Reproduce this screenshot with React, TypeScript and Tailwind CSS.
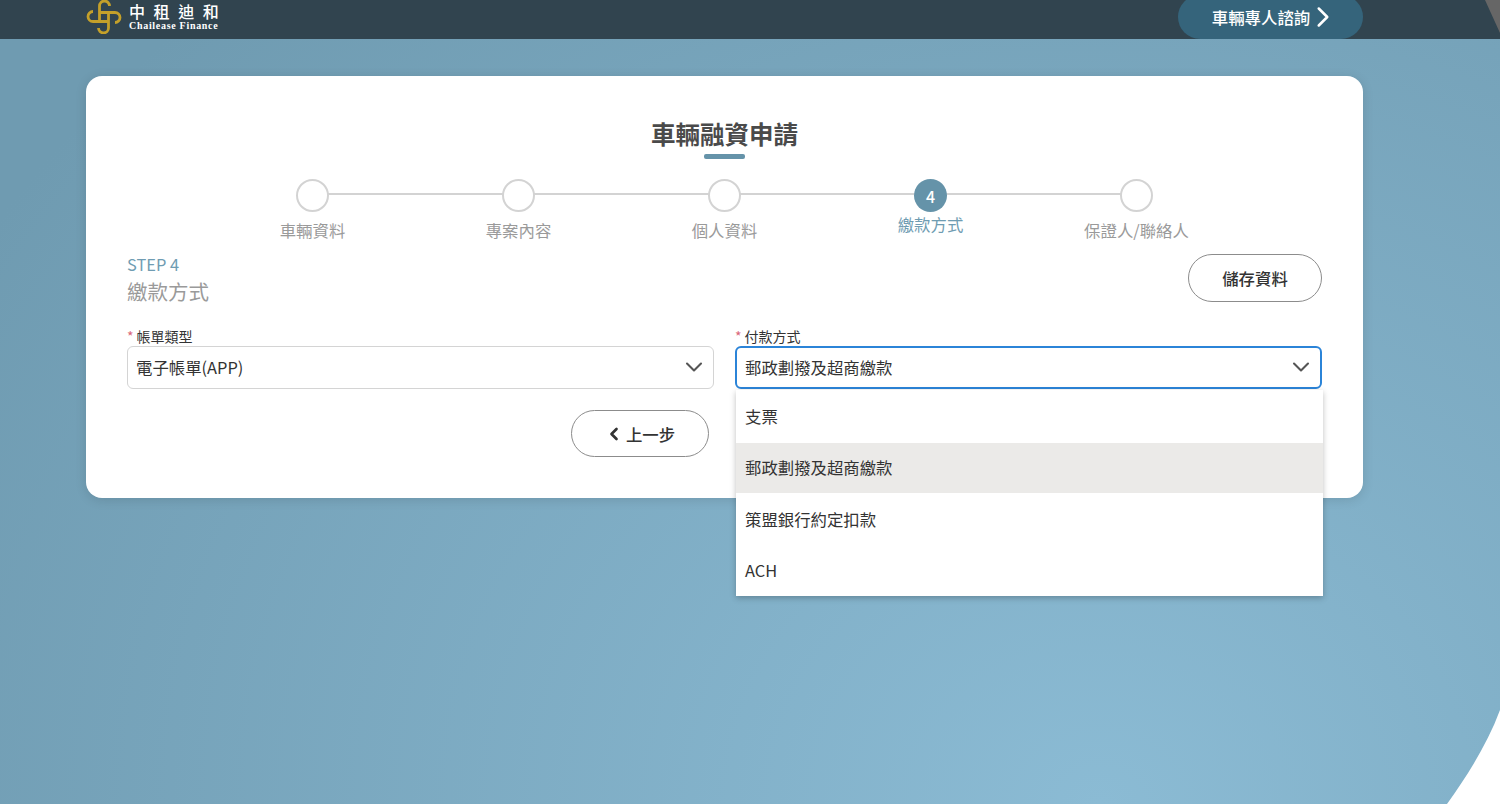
import { ChevronDown, ChevronLeft, ChevronRight } from "lucide-react"

const steps = ["車輛資料", "專案內容", "個人資料", "繳款方式", "保證人/聯絡人"]
const options = ["支票", "郵政劃撥及超商繳款", "策盟銀行約定扣款", "ACH"]

function Logo() {
  // four hooks turned around the middle square
  return (
    <svg width="36" height="34" viewBox="0 0 36 34" fill="none" stroke="#c4a02a" strokeWidth="2.8">
      {[0, 90, 180, 270].map((r) => (
        <path key={r} d="M13.5 21.5V6a5 5 0 0 1 10 0" transform={`rotate(${r} 18 17)`} />
      ))}
    </svg>
  )
}

function Step({ label, index }: { label: string; index: number }) {
  const active = index === 3
  return (
    <div className="relative flex flex-col items-center">
      {index < 4 && <div className="absolute left-1/2 top-[14px] h-[2px] w-full bg-[#d3d3d3]" />}
      {active ? (
        <div className="relative flex h-[33px] w-[33px] items-center justify-center rounded-full bg-[#6593a9] text-base font-medium text-white">
          4
        </div>
      ) : (
        <div className="relative h-[33px] w-[33px] rounded-full border-2 border-[#d3d3d3] bg-white" />
      )}
      <div className={active ? "text-[16.4px] text-[#6f9cb2]" : "mt-[6px] text-[16.4px] text-[#9a9a9a]"}>{label}</div>
    </div>
  )
}

export default function App() {
  return (
    <div className="relative h-[804px] w-[1500px] overflow-hidden bg-[radial-gradient(ellipse_1300px_1100px_at_1100px_804px,#8bbbd4,#6f9bb1)] text-[#333] [font-family:'Noto_Sans_CJK_TC',sans-serif]">
      {/* white corner */}
      <svg className="absolute bottom-0 right-0" width="60" height="100" viewBox="0 0 60 100">
        <path d="M60 6C47 41 27 72 7 100H60Z" fill="#fff" />
      </svg>

      <header className="relative flex h-[39px] items-start justify-between bg-[#31444f] pl-[86px] pr-[137px]">
        <svg className="absolute right-0 top-0" width="15" height="33" viewBox="0 0 15 33">
          <path d="M0 0H15V33Z" fill="#666" />
        </svg>
        <div className="flex items-start gap-[7px]">
          <Logo />
          <div className="pt-[2px] text-white">
            <div className="text-[16px] font-medium leading-[18px] tracking-[8.6px]">中租迪和</div>
            <div className="text-[10px] font-bold leading-[11px] tracking-[0.7px] [font-family:'Liberation_Serif',serif]">Chailease Finance</div>
          </div>
        </div>
        <div className="-mt-[5px] flex h-[44px] w-[185px] items-center justify-center rounded-full bg-[#35647b] pr-[2px] text-[16.4px] font-medium text-white">
          車輛專人諮詢
          <ChevronRight size={34} strokeWidth={1.8} className="-ml-[4px] -mr-[13px]" />
        </div>
      </header>

      <main className="relative ml-[86px] mt-[37px] h-[422px] w-[1277px] rounded-[16px] bg-white px-[41px] pt-[43px] shadow-[0_2px_12px_rgba(0,0,0,0.12)]">
        <h1 className="text-center text-[24.5px] font-bold leading-[30px] text-[#4a4a4a]">車輛融資申請</h1>
        <div className="mx-auto mt-[5px] h-[5px] w-[41px] rounded-[2px] bg-[#6593a9]" />

        <div className="mx-auto mt-[20px] grid w-[1030px] grid-cols-5">
          {steps.map((s, i) => (
            <Step key={s} label={s} index={i} />
          ))}
        </div>

        <div className="mt-[10px] flex items-start justify-between">
          <div>
            <div className="text-[16.4px] leading-[22px] text-[#6f9cb2]">STEP 4</div>
            <div className="text-[20.5px] leading-[32px] text-[#9a9a9a]">繳款方式</div>
          </div>
          <button className="mt-[1px] h-[48px] w-[134px] rounded-full border border-[#8c8c8c] pt-[2px] text-[16.4px] font-medium text-[#333]">
            儲存資料
          </button>
        </div>

        <div className="mt-[21px] grid grid-cols-2 gap-[21px]">
          <div>
            <div className="mb-[2px] text-sm leading-[16px]">
              <span className="mr-[3px] text-[#d9667a]">*</span>帳單類型
            </div>
            <div className="flex h-[43px] items-center justify-between rounded-[6px] border border-[#d4d4d4] pl-[8px] pr-[5px] text-[16.4px]">
              電子帳單(APP)
              <ChevronDown size={28} strokeWidth={1.8} className="text-[#555]" />
            </div>
          </div>
          <div className="relative">
            <div className="mb-[2px] text-sm leading-[16px]">
              <span className="mr-[3px] text-[#d9667a]">*</span>付款方式
            </div>
            <div className="flex h-[43px] items-center justify-between rounded-[6px] border-2 border-[#2b84d8] pl-[8px] pr-[5px] text-[16.4px]">
              郵政劃撥及超商繳款
              <ChevronDown size={28} strokeWidth={1.8} className="text-[#555]" />
            </div>
            <div className="absolute left-[1px] top-[62px] z-10 w-[587px] bg-white pb-[1px] pt-[2px] shadow-[0_2px_6px_rgba(0,0,0,0.25)]">
              <div className="flex h-[51px] items-center px-[9px] pb-[1px] text-[16.4px]">{options[0]}</div>
              <div className="flex h-[50px] items-center bg-[#ebeae8] px-[9px] text-[16.4px]">{options[1]}</div>
              <div className="flex h-[51px] items-center px-[9px] pt-[2px] text-[16.4px]">{options[2]}</div>
              <div className="flex h-[51px] items-center px-[9px] pt-[2px] text-[16.4px]">{options[3]}</div>
            </div>
          </div>
        </div>

        <div className="ml-[444px] mt-[21px]">
          <button className="flex h-[47px] w-[138px] items-center justify-center gap-[2px] rounded-full border border-[#8c8c8c] pr-[1px] pt-[2px] text-[16.4px] font-medium">
            <ChevronLeft size={20} strokeWidth={3.2} />
            上一步
          </button>
        </div>
      </main>
    </div>
  )
}
